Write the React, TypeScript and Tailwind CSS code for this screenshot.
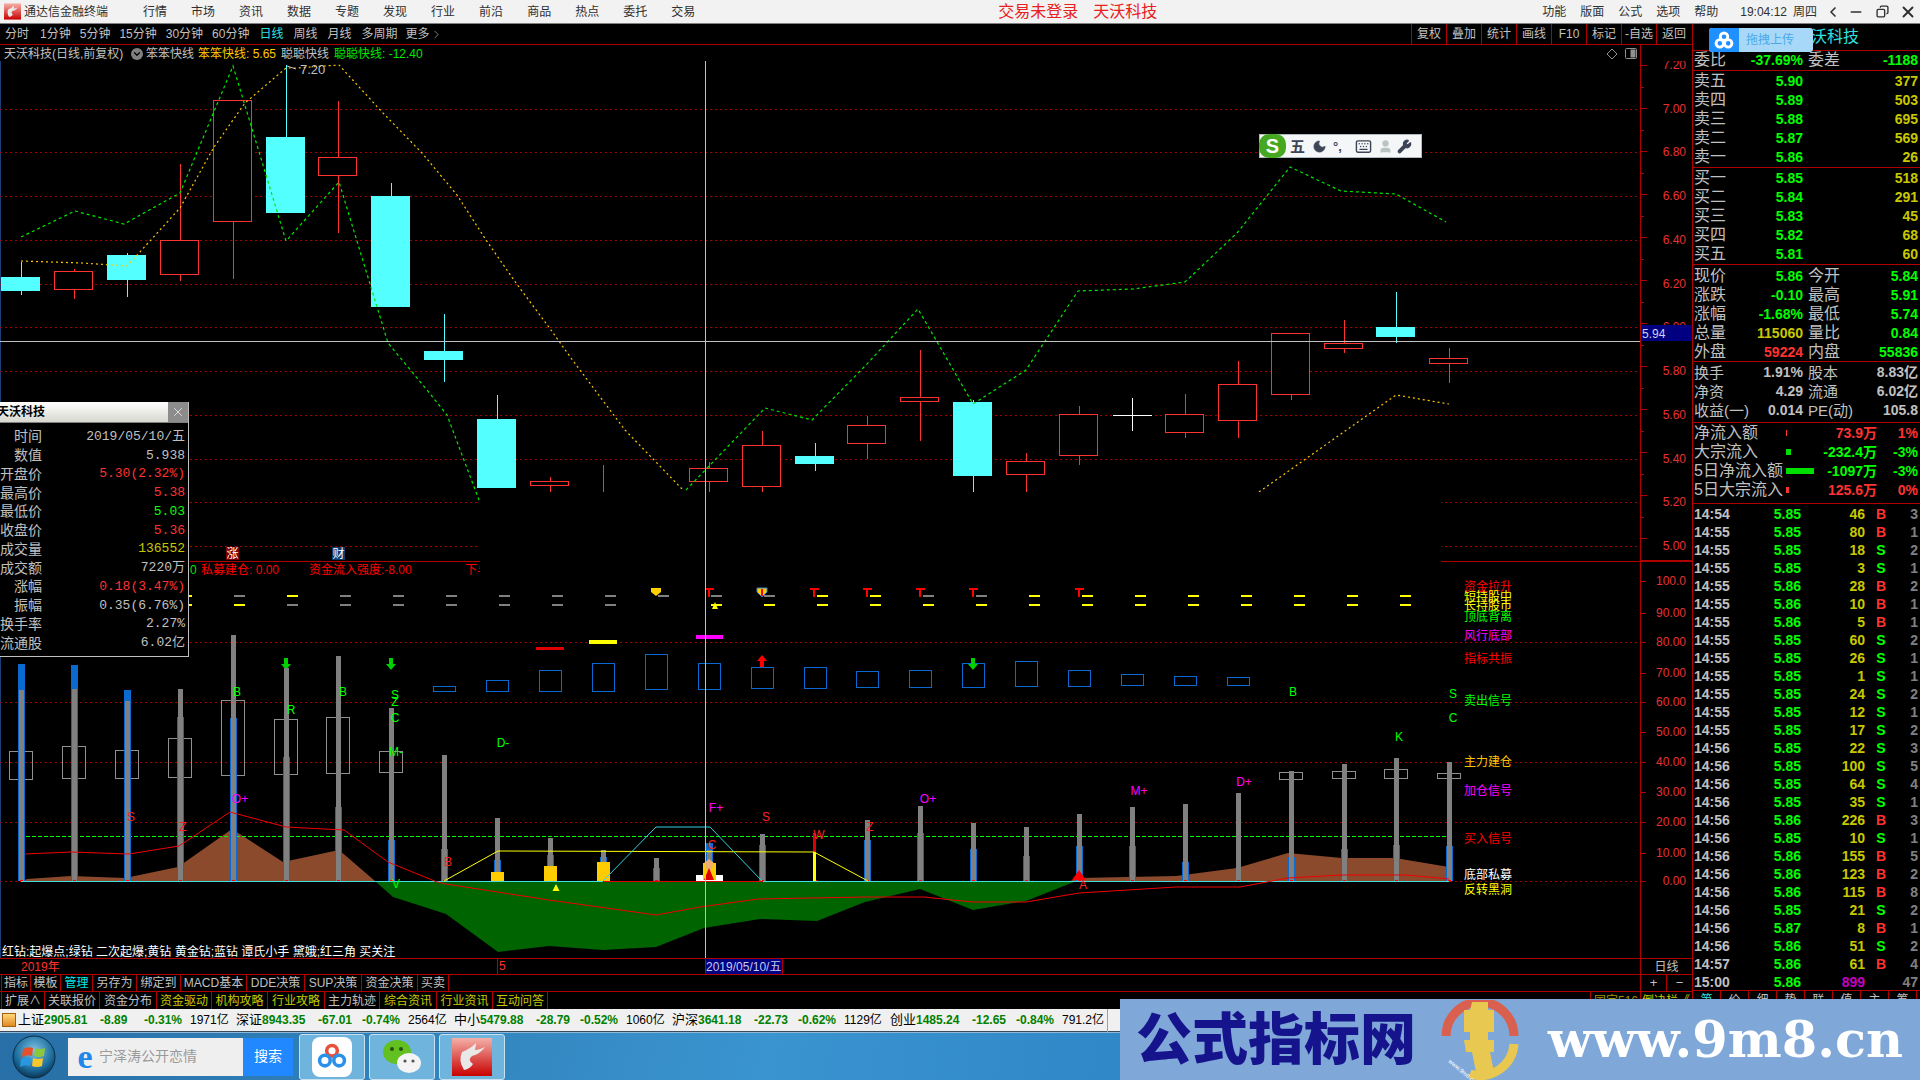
import { Moon, Keyboard, User, Wrench, ChevronLeft, Minus, X, Copy, ChevronDown, ChevronRight } from 'lucide-react';

const X0 = 21;
const STEP = 52.9;
const px = (i: number) => Math.round(X0 + STEP * i);

// candles: index, body top, body bottom, wick top, wick bottom, up (red hollow) or down (cyan filled)
const candles = [
  [0, 277, 290, 262, 295, 0],
  [1, 271, 289, 269, 299, 1],
  [2, 255, 279, 253, 297, 0],
  [3, 240, 274, 164, 281, 1],
  [4, 100, 221, 100, 279, 1],
  [5, 137, 212, 65, 212, 0],
  [6, 157, 175, 101, 233, 1],
  [7, 196, 306, 183, 306, 0],
  [8, 351, 359, 314, 382, 0],
  [9, 419, 487, 395, 487, 0],
  [10, 481, 485, 477, 492, 1],
  [11, 494, 495, 465, 492, 1],
  [13, 468, 481, 462, 492, 1],
  [14, 445, 486, 431, 492, 1],
  [15, 456, 463, 443, 471, 0],
  [16, 425, 443, 416, 459, 1],
  [17, 397, 401, 350, 441, 1],
  [18, 402, 475, 400, 492, 0],
  [19, 461, 474, 453, 492, 1],
  [20, 414, 455, 406, 465, 1],
  [22, 414, 432, 394, 438, 1],
  [23, 384, 420, 361, 438, 1],
  [24, 333, 394, 333, 400, 1],
  [25, 343, 348, 320, 353, 1],
  [26, 327, 336, 292, 343, 0],
  [27, 358, 363, 348, 383, 1],
];

const greenLines = [
  '21,237 75,211 124,224 180,193 233,66 286,241 339,182 388,343 427,390 447,415 479,500',
  '686,490 765,408 812,420 866,365 918,309 973,404 1026,370 1078,291 1133,289 1185,282 1237,233 1290,167 1341,191 1396,194 1446,222',
];
const yellowLines = [
  '21,261 82,263 127,266 139,253 180,208 214,147 245,103 286,68 296,68 339,65 382,112 422,153 457,195 486,240 516,283 551,330 571,358 625,430 683,490',
  '1259,492 1396,395 1449,404',
];

const priceAxis = [
  ['7.20', 65], ['7.00', 109], ['6.80', 152], ['6.60', 196], ['6.40', 240], ['6.20', 284], ['6.00', 327], ['5.80', 371], ['5.60', 415], ['5.40', 459], ['5.20', 502], ['5.00', 546],
] as const;
const priceGrid = [109, 152, 196, 240, 284, 327, 371, 415, 459, 502, 546];
const indexAxis = [
  ['100.0', 581], ['90.00', 613], ['80.00', 642], ['70.00', 673], ['60.00', 702], ['50.00', 732], ['40.00', 762], ['30.00', 792], ['20.00', 822], ['10.00', 853], ['0.00', 881],
] as const;

// volume-like bars: grey top, blue top
const bars = [
  [690, 664], [689, 665], [701, 690], [689, 717], [635, 718], [668, 757], [656, 807], [708, 840], [755, 849], [818, 860], [838, 855], [850, 857], [858, 868],
  [850, 843], [834, 845], [881, 881], [820, 840], [806, 833], [823, 849], [827, 856], [814, 846], [807, 846], [804, 862], [793, 868], [771, 857], [764, 849], [758, 845], [762, 846],
];
const greyBoxes = [
  [0, 751, 779], [1, 746, 778], [2, 750, 778], [3, 738, 777], [4, 700, 775], [5, 719, 774], [6, 717, 773], [7, 751, 772],
  [24, 772, 779], [25, 771, 778], [26, 769, 778], [27, 773, 778],
];
const blueBoxes = [
  [8, 686, 691], [9, 680, 691], [10, 670, 691], [11, 663, 691], [12, 654, 689], [13, 663, 689], [14, 667, 688], [15, 667, 688], [16, 671, 687],
  [17, 670, 687], [18, 663, 687], [19, 661, 686], [20, 670, 686], [21, 674, 685], [22, 676, 685], [23, 677, 685],
];
// colour of the two short marks in every column, g grey, y yellow
const marks = 'yy gy yg gg gg gg gg gg gg gx gy gy yy yy gy gy yy yy yy yy yy yy yy yy'.split(' ');

const chartLetters = [
  ['B', 237, 692, '#00ff00'], ['R', 291, 710, '#00ff00'], ['B', 343, 692, '#00ff00'], ['S', 395, 695, '#00ff00'], ['Z', 395, 702, '#00ff00'], ['C', 395, 718, '#00ff00'],
  ['M-', 396, 752, '#00ff00'], ['D-', 503, 743, '#00ff00'], ['V', 396, 884, '#00ff00'], ['O+', 240, 799, '#ff00ff'], ['S', 131, 817, '#ff2020'], ['Z', 183, 827, '#ff2020'],
  ['B', 448, 862, '#ff2020'], ['F+', 716, 808, '#ff00ff'], ['S', 766, 817, '#ff2020'], ['W', 819, 835, '#ff2020'], ['Z', 870, 827, '#ff2020'], ['O+', 928, 799, '#ff00ff'],
  ['M+', 1139, 791, '#ff00ff'], ['D+', 1244, 782, '#ff00ff'], ['B', 1293, 692, '#00ff00'], ['S', 1453, 694, '#00ff00'], ['C', 1453, 718, '#00ff00'], ['K', 1399, 737, '#00ff00'],
  ['C', 712, 845, '#ff2020'], ['A', 1083, 885, '#ff2020'],
] as const;

const legend = [
  ['资金拉升', 587, '#ff0000'], ['短持股中', 597, '#ffff00'], ['长持股币', 606, '#ffff00'], ['顶底背离', 617, '#00ff00'], ['风行底部', 636, '#ff00ff'], ['指标共振', 659, '#ff0000'],
  ['卖出信号', 701, '#00ff00'], ['主力建仓', 762, '#ffc000'], ['加仓信号', 791, '#ff00ff'], ['买入信号', 839, '#ff0000'], ['底部私募', 875, '#ffffff'], ['反转黑洞', 890, '#ffff00'],
] as const;

const trades = [
  ['14:54', '5.85', '46', 'B', '3'], ['14:55', '5.85', '80', 'B', '1'], ['14:55', '5.85', '18', 'S', '2'], ['14:55', '5.85', '3', 'S', '1'], ['14:55', '5.86', '28', 'B', '2'],
  ['14:55', '5.86', '10', 'B', '1'], ['14:55', '5.86', '5', 'B', '1'], ['14:55', '5.85', '60', 'S', '2'], ['14:55', '5.85', '26', 'S', '1'], ['14:55', '5.85', '1', 'S', '1'],
  ['14:55', '5.85', '24', 'S', '2'], ['14:55', '5.85', '12', 'S', '1'], ['14:55', '5.85', '17', 'S', '2'], ['14:56', '5.85', '22', 'S', '3'], ['14:56', '5.85', '100', 'S', '5'],
  ['14:56', '5.85', '64', 'S', '4'], ['14:56', '5.85', '35', 'S', '1'], ['14:56', '5.86', '226', 'B', '3'], ['14:56', '5.85', '10', 'S', '1'], ['14:56', '5.86', '155', 'B', '5'],
  ['14:56', '5.86', '123', 'B', '2'], ['14:56', '5.86', '115', 'B', '8'], ['14:56', '5.85', '21', 'S', '2'], ['14:56', '5.87', '8', 'B', '1'], ['14:56', '5.86', '51', 'S', '2'],
  ['14:57', '5.86', '61', 'B', '4'], ['15:00', '5.86', '899', '', '47'],
];

const sells = [['卖五', '5.90', '377'], ['卖四', '5.89', '503'], ['卖三', '5.88', '695'], ['卖二', '5.87', '569'], ['卖一', '5.86', '26']];
const buys = [['买一', '5.85', '518'], ['买二', '5.84', '291'], ['买三', '5.83', '45'], ['买四', '5.82', '68'], ['买五', '5.81', '60']];

const quote = [
  ['现价', '5.86', 'text-[#00ff00]', '今开', '5.84', 'text-[#00ff00]'],
  ['涨跌', '-0.10', 'text-[#00ff00]', '最高', '5.91', 'text-[#00ff00]'],
  ['涨幅', '-1.68%', 'text-[#00ff00]', '最低', '5.74', 'text-[#00ff00]'],
  ['总量', '115060', 'text-[#c8c800]', '量比', '0.84', 'text-[#00ff00]'],
  ['外盘', '59224', 'text-[#ff3232]', '内盘', '55836', 'text-[#00ff00]'],
];
const shares = [
  ['换手', '1.91%', '股本', '8.83亿'],
  ['净资', '4.29', '流通', '6.02亿'],
  ['收益(一)', '0.014', 'PE(动)', '105.8'],
];
const flows = [
  ['净流入额', 1, 'bg-[#ff3232]', '73.9万', '1%', 'text-[#ff3232]'],
  ['大宗流入', 5, 'bg-[#00e000]', '-232.4万', '-3%', 'text-[#00ff00]'],
  ['5日净流入额', 28, 'bg-[#00e000]', '-1097万', '-3%', 'text-[#00ff00]'],
  ['5日大宗流入', 3, 'bg-[#ff3232]', '125.6万', '0%', 'text-[#ff3232]'],
] as const;

const dataRows = [
  ['时间', '2019/05/10/五', 'text-[#c0c0c0]'], ['数值', '5.938', 'text-[#c0c0c0]'], ['开盘价', '5.30(2.32%)', 'text-[#ff3232]'], ['最高价', '5.38', 'text-[#ff3232]'],
  ['最低价', '5.03', 'text-[#00ff00]'], ['收盘价', '5.36', 'text-[#ff3232]'], ['成交量', '136552', 'text-[#c8c800]'], ['成交额', '7220万', 'text-[#c0c0c0]'],
  ['涨幅', '0.18(3.47%)', 'text-[#ff3232]'], ['振幅', '0.35(6.76%)', 'text-[#c0c0c0]'], ['换手率', '2.27%', 'text-[#c0c0c0]'], ['流通股', '6.02亿', 'text-[#c0c0c0]'],
];

const menus = ['行情', '市场', '资讯', '数据', '专题', '发现', '行业', '前沿', '商品', '热点', '委托', '交易'];
const periods = ['1分钟', '5分钟', '15分钟', '30分钟', '60分钟'];
const rightTools = ['复权', '叠加', '统计', '画线', 'F10', '标记', '-自选', '返回'];
const tools1 = [['指标', 29], ['模板', 30], ['管理', 32], ['另存为', 44], ['绑定到', 44], ['MACD基本', 66], ['DDE决策', 58], ['SUP决策', 57], ['资金决策', 56], ['买卖', 31]] as const;
const tools2 = [['扩展∧', 43, 0], ['关联报价', 55, 0], ['资金分布', 57, 0], ['资金驱动', 55, 1], ['机构攻略', 56, 1], ['行业攻略', 57, 1], ['主力轨迹', 55, 0], ['综合资讯', 57, 1], ['行业资讯', 56, 1], ['互动问答', 55, 1]] as const;
const indices = [
  ['上证', '2905.81', '-8.89', '-0.31%', '1971亿'],
  ['深证', '8943.35', '-67.01', '-0.74%', '2564亿'],
  ['中小', '5479.88', '-28.79', '-0.52%', '1060亿'],
  ['沪深', '3641.18', '-22.73', '-0.62%', '1129亿'],
  ['创业', '1485.24', '-12.65', '-0.84%', '791.2亿'],
];

const TdxMark = ({ size, id }: { size: string; id: string }) => (
  <svg viewBox="0 0 40 38" className={size}>
    <defs>
      <linearGradient id={id} x1="0" y1="0" x2="0" y2="1">
        <stop offset="0%" stopColor="#f4b0a8" />
        <stop offset="100%" stopColor="#c80000" />
      </linearGradient>
    </defs>
    <rect width="40" height="38" fill={`url(#${id})`} />
    <path d="M24,5 q-6,6 -14,9 q-4,8 2,18 q6,-1 9,-6 q-6,-4 -1,-8 q8,-2 13,-9 q-6,3 -10,3 q1,-4 1,-7 z" fill="#e8e8e8" />
  </svg>
);

const Chart = () => (
  <svg viewBox="0 61 1692 897" className="block w-[1692px] h-[897px]" fontSize="12">
    <line x1="0.5" y1="61" x2="0.5" y2="958" stroke="#1a3f73" />
    {[...priceGrid, 642, 702, 762, 822, 881].map((y) => (
      <line key={y} x1="0" y1={y + 0.5} x2="1640" y2={y + 0.5} stroke="#a80000" strokeDasharray="2 3" />
    ))}

    {candles.map(([i, top, bot, hi, lo, up]) => {
      const x = px(i);
      const c = up ? '#ff3232' : '#54ffff';
      return (
        <g key={i} shapeRendering="crispEdges">
          <line x1={x + 0.5} y1={hi} x2={x + 0.5} y2={lo} stroke={c} />
          <rect x={x - 19.5} y={top + 0.5} width="38" height={bot - top} fill={up ? '#000' : c} stroke={c} />
        </g>
      );
    })}
    {/* the doji */}
    <g stroke="#ffffff" shapeRendering="crispEdges">
      <line x1="1113" y1="415.5" x2="1152" y2="415.5" />
      <line x1="1132.5" y1="398" x2="1132.5" y2="431" />
    </g>
    {greenLines.map((p) => <polyline key={p} points={p} fill="none" stroke="#00e800" strokeWidth="1.2" strokeDasharray="3 3" />)}
    {yellowLines.map((p) => <polyline key={p} points={p} fill="none" stroke="#ffc800" strokeWidth="1.2" strokeDasharray="2 3" />)}
    <text x="300" y="74" fill="#c0c0c0" fontSize="13">7.20</text>
    <polyline points="287,66 296,69" fill="none" stroke="#c0c0c0" />

    {/* blank strip between the panes */}
    <rect x="480" y="492" width="961" height="84" fill="#000" />
    <g shapeRendering="crispEdges">
      <line x1="190" y1="561.5" x2="480" y2="561.5" stroke="#b00000" />
      <line x1="1441" y1="561.5" x2="1640" y2="561.5" stroke="#b00000" />
    </g>
    <rect x="226" y="547" width="13" height="13" fill="#7a0000" />
    <text x="232.5" y="558" textAnchor="middle" fill="#fff" fontSize="12">涨</text>
    <rect x="332" y="547" width="13" height="13" fill="#0a3c6e" />
    <text x="338.5" y="558" textAnchor="middle" fill="#fff" fontSize="12">财</text>
    <text x="190" y="574" fill="#00e000">0</text>
    <text x="201" y="574" fill="#ff0000">私募建仓: 0.00</text>
    <text x="309" y="574" fill="#ff0000">资金流入强度:-8.00</text>
    <text x="465" y="574" fill="#ff0000">下与</text>
    <rect x="480" y="562" width="14" height="14" fill="#000" />

    {/* short marks */}
    <g shapeRendering="crispEdges">
      {marks.map((m, k) => {
        const x = 186 + 53 * k - 5;
        const col = (c: string) => (c === 'y' ? '#ffff00' : '#808080');
        return (
          <g key={k}>
            <rect x={x} y="595" width="11" height="2" fill={col(m[0])} />
            {m[1] !== 'x' && <rect x={x} y="604" width="11" height="2" fill={col(m[1])} />}
          </g>
        );
      })}
    </g>
    {[709, 762, 814, 867, 920, 973, 1079].map((x) => (
      <g key={x} fill="#ff0000" shapeRendering="crispEdges">
        <rect x={x - 4} y="588" width="9" height="2" />
        <rect x={x - 1} y="588" width="2" height="9" />
      </g>
    ))}
    <path d="M651,588 h10 v4 l-5,4 l-5,-4 z" fill="#ffd000" />
    <path d="M757,588 h10 v4 l-5,5 l-5,-5 z" fill="#ffd000" stroke="#3080d0" />
    <rect x="761" y="589" width="2" height="7" fill="#ff0000" />
    <path d="M715,602 l3,7 h-6 z" fill="#ffff00" />
    <rect x="536" y="647" width="28" height="3" fill="#e00000" />
    <rect x="589" y="640" width="28" height="4" fill="#ffff00" />
    <rect x="696" y="635" width="27" height="4" fill="#ff00ff" />

    {blueBoxes.map(([i, t, b]) => (
      <rect key={i} x={px(i) - 10.5} y={t + 0.5} width="22" height={b - t} fill="none" stroke="#0a6ad0" shapeRendering="crispEdges" />
    ))}

    {/* arrows */}
    <path d="M762,655 l5,6 h-3 v6 h-4 v-6 h-3 z" fill="#ff0000" />
    <path d="M973,670 l-5,-6 h3 v-6 h4 v6 h3 z" fill="#00d000" />
    <path d="M286,670 l-5,-6 h3 v-6 h4 v6 h3 z" fill="#00d000" />
    <path d="M391,670 l-5,-6 h3 v-6 h4 v6 h3 z" fill="#00d000" />

    {/* areas */}
    <polygon points="22,881 27,879 71,876 125,878 178,867 232,829 283,862 339,850 375,881" fill="#8b4a2b" />
    <polygon points="1070,881 1079,878 1176,876 1237,868 1288,853 1342,858 1395,858 1449,867 1449,881" fill="#8b4a2b" />
    <polygon points="375,881 393,897 446,914 498,952 549,946 603,950 656,947 704,928 760,919 817,921 865,902 920,889 973,910 1026,901 1074,882 1074,881" fill="#006400" />

    <line x1="26" y1="836.5" x2="1449" y2="836.5" stroke="#00ff00" strokeDasharray="4 2" />

    {greyBoxes.map(([i, t, b]) => (
      <rect key={i} x={px(i) - 11.5} y={t + 0.5} width="23" height={b - t} fill="none" stroke="#909090" shapeRendering="crispEdges" />
    ))}
    <g shapeRendering="crispEdges">
      {bars.map(([grey, blue], i) => {
        const x = px(i);
        return (
          <g key={i}>
            <rect x={x - 3} y={blue} width="7" height={881 - blue} fill="#0a6ad0" />
            <rect x={x - 2} y={grey} width="5" height={881 - grey} fill="#808080" />
            <rect x={x - 1} y="880" width="3" height="2" fill="#ff0000" />
          </g>
        );
      })}
      <rect x="491" y="872" width="13" height="9" fill="#ffcc00" />
      <rect x="544" y="866" width="13" height="15" fill="#ffcc00" />
      <rect x="597" y="862" width="13" height="19" fill="#ffcc00" />
      <rect x="696" y="875" width="27" height="6" fill="#ffffff" />
      <rect x="703" y="863" width="13" height="17" fill="#ffcc00" />
      <rect x="813" y="833" width="3" height="19" fill="#e00000" />
      <rect x="813" y="852" width="3" height="29" fill="#ffff00" />
    </g>
    <path d="M709,859 l5,4 l-3,8 h-4 l-3,-8 z" fill="#f0b070" />
    <path d="M709,868 l5,12 h-10 z" fill="#e00000" />
    <path d="M1079,870 l7,10 h-14 z" fill="#ff0000" />
    <path d="M556,884 l3.5,7 h-7 z" fill="#ffff00" />
    <line x1="21" y1="881.5" x2="603" y2="881.5" stroke="#40e0e0" />
    <line x1="603" y1="881.5" x2="763" y2="881.5" stroke="#e00000" />
    <line x1="763" y1="881.5" x2="1449" y2="881.5" stroke="#40e0e0" />

    <polyline points="444,881 498,851 814,852 868,881" fill="none" stroke="#ffff00" />
    <polyline points="603,881 656,827 710,827 762,881" fill="none" stroke="#30d0e0" />
    <polyline
      points="25,854 71,852 129,854 179,846 230,812 286,827 344,830 388,862 437,882 446,884 549,900 656,915 700,907 758,899 865,897 924,897 972,902 1026,902 1079,893 1176,887 1240,887 1288,878 1342,875 1406,875 1449,879"
      fill="none"
      stroke="#f00000"
    />

    {chartLetters.map(([t, x, y, c], k) => (
      <text key={k} x={x} y={y} fill={c} fontSize="12" textAnchor="middle" dominantBaseline="central">{t}</text>
    ))}
    {legend.map(([t, y, c]) => (
      <text key={t} x="1464" y={y} fill={c} fontSize="12" dominantBaseline="central">{t}</text>
    ))}

    <line x1="0" y1="341.5" x2="1640" y2="341.5" stroke="#c0c0c0" />
    <line x1="705.5" y1="61" x2="705.5" y2="958" stroke="#c0c0c0" />

    {/* axis */}
    <g shapeRendering="crispEdges">
      <line x1="1640.5" y1="61" x2="1640.5" y2="958" stroke="#b00000" />
      <rect x="1640" y="560" width="52" height="2" fill="#b00000" />
      {Array.from({ length: 24 }, (_, k) => 65 + k * 21.5).filter((y) => y < 556).map((y) => (
        <line key={y} x1="1641" y1={Math.round(y) + 0.5} x2={Math.round((y - 65) / 21.5) % 2 ? 1644 : 1647} y2={Math.round(y) + 0.5} stroke="#b00000" />
      ))}
      {indexAxis.map(([, y]) => (
        <line key={y} x1="1641" y1={y + 0.5} x2="1646" y2={y + 0.5} stroke="#b00000" />
      ))}
    </g>
    {priceAxis.map(([t, y]) => (
      <text key={t} x="1686" y={y} textAnchor="end" dominantBaseline="central" fill="#e83030" fontSize="12">{t}</text>
    ))}
    {indexAxis.map(([t, y]) => (
      <text key={t} x="1686" y={y} textAnchor="end" dominantBaseline="central" fill="#e83030" fontSize="12">{t}</text>
    ))}
    <rect x="1641" y="325" width="51" height="16" fill="#000080" />
    <text x="1642" y="334" dominantBaseline="central" fill="#d0d0f0" fontSize="12">5.94</text>
  </svg>
);

const DataWindow = () => (
  <div className="absolute left-0 top-[402px] w-[189px] h-[255px] bg-black border-r border-b border-[#c0c0c0]">
    <div className="flex items-center justify-between h-[21px] bg-gradient-to-b from-[#ffffff] to-[#d8d8d0] border-b border-[#808080]">
      <span className="-ml-[3px] text-[12px] font-bold text-black">天沃科技</span>
      <span className="flex items-center justify-center w-[20px] h-[20px] bg-[#8c8c8c] text-white">
        <X size={14} strokeWidth={1.2} />
      </span>
    </div>
    <div className="pt-[4px]">
      {dataRows.map(([label, val, col]) => (
        <div key={label} className="flex items-center h-[18.75px]">
          <div className="flex justify-end w-[42px] overflow-hidden whitespace-nowrap text-[14px] leading-none text-[#c0c0c0]">{label}</div>
          <div className={`flex-1 pr-[3px] text-right text-[13px] leading-none [font-family:'Liberation_Mono','Noto_Sans_CJK_SC',monospace] ${col}`}>{val}</div>
        </div>
      ))}
    </div>
  </div>
);

const ImeBar = () => (
  <div className="absolute left-[1259px] top-[134px] flex items-center gap-[4px] w-[163px] h-[24px] pr-[3px] bg-[#f4f6f8] border border-[#b0b8c0] text-[#3c4456]">
    <span className="flex items-center justify-center w-[27px] h-[24px] -ml-px rounded-[10px] bg-[#46a820] text-[20px] font-bold leading-none text-white">S</span>
    <span className="text-[15px] font-bold leading-none">五</span>
    <Moon size={15} fill="#3c4456" strokeWidth={1} className="ml-[3px]" />
    <span className="ml-[2px] w-[18px] text-[13px] font-bold leading-none">°,</span>
    <Keyboard size={17} />
    <User size={15} fill="#b8c4c0" stroke="#b8c4c0" className="ml-[2px]" />
    <Wrench size={15} fill="#3c4456" />
  </div>
);

const Watermark = () => (
  <div className="absolute left-[1120px] top-[999px] flex items-center w-[800px] h-[81px] bg-[#7fa8d8]">
    <span className="ml-[16px] w-[290px] whitespace-nowrap text-[56px] font-black leading-none text-[#16148c]">公式指标网</span>
    <svg viewBox="0 0 80 80" className="ml-[14px] shrink-0 w-[80px] h-[80px]">
      <path d="M6,36 A34,34 0 0 1 74,36" fill="none" stroke="#d9604e" strokeWidth="9" />
      <path d="M74,44 A34,34 0 0 1 30,74" fill="none" stroke="#e8c850" strokeWidth="9" />
      <path d="M32,2 h16 v8 h6 v22 h-6 v8 h6 v12 h-4 l4,20 h-18 l-4,-20 h-6 l-2,-12 h6 v-8 h-6 v-22 h6 z" fill="#e8c850" />
      <text x="8" y="62" fill="#fff" fontSize="6" transform="rotate(40 8 62)">www.9m8.cn</text>
    </svg>
    <span className="ml-[28px] whitespace-nowrap text-[51px] font-black leading-none text-white [font-family:'DejaVu_Serif',serif]">www.9m8.cn</span>
  </div>
);

const Taskbar = () => (
  <div className="flex items-center h-[48px] bg-[linear-gradient(100deg,#276fa6,#3a94cf_40%,#2a7fc4_70%,#2e86c8)] border-t border-[#8fb8d8]">
    <svg viewBox="0 0 44 44" className="ml-[12px] w-[44px] h-[44px]">
      <defs>
        <radialGradient id="orb" cx="50%" cy="35%" r="65%">
          <stop offset="0%" stopColor="#7fc4ea" />
          <stop offset="70%" stopColor="#1a6a9a" />
          <stop offset="100%" stopColor="#0c3450" />
        </radialGradient>
      </defs>
      <circle cx="22" cy="22" r="21" fill="url(#orb)" stroke="#0c2c44" />
      <path d="M11,14 q5,-3 10,-1 l-1,8 q-5,-2 -10,1 z" fill="#e8502a" />
      <path d="M23,13 q5,2 10,0 l-1,8 q-5,2 -10,0 z" fill="#8cc83c" />
      <path d="M9,24 q5,-3 10,-1 l-1,8 q-5,-2 -10,1 z" fill="#2a98e0" />
      <path d="M21,23 q5,2 10,0 l-1,8 q-5,2 -10,0 z" fill="#f8c82c" />
    </svg>
    <div className="flex items-center ml-[12px] w-[225px] h-[38px] bg-[#efefef]">
      <span className="ml-[5px] w-[24px] text-center text-[34px] font-bold leading-[30px] text-[#2088e8] [font-family:'Liberation_Serif',serif]">e</span>
      <span className="flex-1 ml-[2px] text-[14px] text-[#9a9a9a]">宁泽涛公开恋情</span>
      <span className="flex items-center justify-center w-[50px] h-[38px] bg-[#2288ff] text-[14px] text-white">搜索</span>
    </div>
    <div className="flex items-center justify-center ml-[6px] w-[66px] h-[46px] rounded-[3px] border border-[#c8e0f0] bg-[#6fb4dc]">
      <span className="flex items-center justify-center w-[40px] h-[40px] rounded-[8px] bg-white">
        <svg viewBox="0 0 36 36" className="w-[32px] h-[32px]" fill="none" strokeWidth="4">
          <circle cx="18" cy="11" r="6" stroke="#e8503a" />
          <circle cx="10" cy="22" r="6" stroke="#2a90e8" />
          <circle cx="26" cy="22" r="6" stroke="#2a90e8" />
        </svg>
      </span>
    </div>
    <div className="flex items-center justify-center ml-[4px] w-[66px] h-[46px] rounded-[3px] border border-[#c8e0f0] bg-[#6fb4dc]">
      <svg viewBox="0 0 44 40" className="w-[44px] h-[40px]">
        <ellipse cx="17" cy="15" rx="14" ry="12" fill="#62c020" />
        <circle cx="12" cy="12" r="2" fill="#2a5010" />
        <circle cx="21" cy="12" r="2" fill="#2a5010" />
        <ellipse cx="29" cy="26" rx="12" ry="10" fill="#f4f4f4" />
        <circle cx="25" cy="24" r="1.6" fill="#555" />
        <circle cx="33" cy="24" r="1.6" fill="#555" />
      </svg>
    </div>
    <div className="flex items-center justify-center ml-[4px] w-[66px] h-[46px] rounded-[3px] border border-[#c8e0f0] bg-[#6fb4dc]">
      <TdxMark size="w-[40px] h-[38px]" id="tdx" />
    </div>
  </div>
);

const StatusBar = () => (
  <div className="flex items-center h-[23px] bg-[#f0f0f0] border-b border-[#3a4a5a] text-[12px] text-black">
    <span className="ml-[2px] mr-[2px] w-[14px] h-[14px] bg-gradient-to-b from-[#ffd878] to-[#e08820] border border-[#a06010]" />
    {indices.map(([name, val, chg, pct, amt]) => (
      <div key={name} className="flex items-center w-[218px] shrink-0">
        <span className="w-[26px] text-[13px]">{name}</span>
        <span className="w-[56px] font-bold text-[#008000]">{val}</span>
        <span className="w-[44px] font-bold text-[#008000]">{chg}</span>
        <span className="w-[46px] font-bold text-[#008000]">{pct}</span>
        <span className="whitespace-nowrap">{amt}</span>
      </div>
    ))}
    <span className="h-[23px] ml-[-1px] border-l border-[#a0a0a0]" />
  </div>
);

const cell = 'flex items-center justify-center h-full border-r border-[#b00000] text-[12px] whitespace-nowrap';
const quoteRow = 'grid grid-cols-[44px_66px_48px_1fr] items-center h-[19px] leading-none';

const App = () => (
  <div className="relative flex flex-col w-[1920px] h-[1080px] overflow-hidden bg-black text-[#c0c0c0] [font-family:'Liberation_Sans','Noto_Sans_CJK_SC',sans-serif]">
    {/* top menu */}
    <div className="flex items-center shrink-0 h-[24px] bg-[#f2f2f2] border-b border-[#808080] text-[12px] text-[#303030]">
      <span className="ml-[4px] w-[17px] h-[17px]">
        <TdxMark size="block w-[17px] h-[17px]" id="tdx-small" />
      </span>
      <span className="ml-[3px] w-[119px]">通达信金融终端</span>
      <div className="flex gap-[24px]">
        {menus.map((m) => <span key={m}>{m}</span>)}
      </div>
      <div className="flex gap-[15px] ml-[303px] text-[16px] text-[#e82020]">
        <span>交易未登录</span>
        <span>天沃科技</span>
      </div>
      <div className="flex items-center gap-[14px] ml-auto">
        {['功能', '版面', '公式', '选项', '帮助'].map((m) => <span key={m}>{m}</span>)}
        <span className="ml-[8px]">19:04:12</span>
      </div>
      <span className="ml-[6px]">周四</span>
      <ChevronLeft size={16} strokeWidth={2.5} className="ml-[8px]" />
      <Minus size={16} strokeWidth={2.5} className="ml-[7px]" />
      <Copy size={13} strokeWidth={2.5} className="ml-[12px] -scale-x-100" />
      <X size={18} strokeWidth={2.5} className="ml-[10px] mr-[3px]" />
    </div>

    <div className="flex shrink-0 h-[985px]">
      {/* chart column */}
      <div className="flex flex-col w-[1692px] shrink-0">
        <div className="flex items-center h-[21px] border-b border-[#b00000] text-[12px]">
          <span className="ml-[5px]">分时</span>
          <div className="flex gap-[9px] ml-[11px]">
            {periods.map((p) => <span key={p}>{p}</span>)}
          </div>
          <span className="ml-[10px] text-[#30e0e0]">日线</span>
          <div className="flex gap-[10px] ml-[10px]">
            <span>周线</span>
            <span>月线</span>
            <span>多周期</span>
          </div>
          <span className="flex items-center ml-[8px]">更多<ChevronRight size={13} strokeWidth={1.2} /></span>
          <div className="flex ml-auto h-full">
            {rightTools.map((t) => (
              <span key={t} className="flex items-center justify-center w-[35px] h-full border-l border-[#b00000]">{t}</span>
            ))}
            <span className="w-px" />
          </div>
        </div>
        <div className="flex items-center h-[16px] pt-[2px] text-[12px] whitespace-nowrap">
          <span className="ml-[4px] w-[127px]">天沃科技(日线,前复权)</span>
          <span className="flex items-center justify-center w-[12px] h-[12px] rounded-full bg-[#808080] text-black">
            <ChevronDown size={10} strokeWidth={3} />
          </span>
          <span className="ml-[3px] w-[52px]">笨笨快线</span>
          <span className="w-[83px] text-[#ffc800]">笨笨快线: 5.65</span>
          <span className="w-[53px]">聪聪快线</span>
          <span className="text-[#00e800]">聪聪快线: -12.40</span>
          <svg viewBox="0 0 30 14" className="ml-auto mr-[55px] w-[30px] h-[14px]" fill="none" stroke="#909090">
            <path d="M5,2 L10,7 L5,12 L0,7 Z" />
            <rect x="18.5" y="1.5" width="11" height="10" rx="1" />
            <rect x="24" y="3" width="4" height="7" fill="#909090" />
          </svg>
          <span className="absolute left-[1640px] top-[45px] h-[16px] border-l border-[#b00000]" />
        </div>
        <Chart />
        <div className="flex items-center h-[16px] border-t border-[#b00000] text-[12px]">
          <span className="ml-[21px] w-[476px] text-[#ff3232]">2019年</span>
          <span className="pl-[1px] w-[208px] h-full border-l border-[#b00000] leading-[15px] text-[#ff3232]">5</span>
          <span className="flex items-center w-[78px] h-full bg-[#000080] border-x border-[#b00000] text-[#c8c8f0]">2019/05/10/五</span>
          <span className="flex items-center justify-center ml-auto w-[52px] h-full border-l border-[#b00000]">日线</span>
        </div>
        <div className="flex h-[17px] border-t border-[#b00000]">
          <div className="w-[2px] border-r border-[#b00000]" />
          {tools1.map(([t, w]) => (
            <span key={t} style={{ width: w }} className={`${cell} ${t === '管理' ? 'text-[#00e8e8]' : ''}`}>{t}</span>
          ))}
          <div className="flex ml-auto w-[52px] h-full border-l border-[#b00000] text-[13px] leading-[15px]">
            <span className="flex-1 text-center border-r border-[#b00000]">+</span>
            <span className="flex-1 text-center">−</span>
          </div>
        </div>
        <div className="flex h-[18px] border-t border-[#b00000]">
          <div className="w-[2px] border-r border-[#b00000]" />
          {tools2.map(([t, w, hot]) => (
            <span key={t} style={{ width: w }} className={`${cell} ${hot ? 'text-[#c8c800]' : ''}`}>{t}</span>
          ))}
          <span className="flex items-start ml-auto w-[50px] h-full border-l border-[#b00000] pl-[3px] text-[12px] whitespace-nowrap text-[#a09000]">固定516</span>
          <span className="flex items-start w-[52px] h-full border-l border-[#b00000] pl-[1px] text-[12px] whitespace-nowrap text-[#c8c800]">倒决栏《</span>
        </div>
      </div>

      {/* quote panel */}
      <div className="flex flex-col w-[228px] shrink-0 border-l border-[#b00000]">
        <div className="flex items-center h-[27px] pl-[102px] border-b border-[#b00000] text-[16px] text-[#30e0e0]">天沃科技</div>
        <div className="grid grid-cols-[44px_66px_48px_1fr] items-center h-[20px] pr-[2px] border-b border-[#b00000] font-bold text-[14px] leading-none text-[#00ff00]">
          <span className="pl-[1px] text-[16px] font-normal text-[#c0c0c0]">委比</span>
          <span className="text-right">-37.69%</span>
          <span className="pl-[5px] text-[16px] font-normal text-[#c0c0c0]">委差</span>
          <span className="text-right">-1188</span>
        </div>
        {[sells, buys].map((rows, k) => (
          <div key={k} className="h-[97px] pt-[1px] pr-[2px] border-b border-[#b00000]">
            {rows.map(([l, p, v]) => (
              <div key={l} className={quoteRow}>
                <span className="pl-[1px] text-[16px]">{l}</span>
                <span className="text-right text-[14px] font-bold text-[#00ff00]">{p}</span>
                <span />
                <span className="text-right text-[14px] font-bold text-[#c8c800]">{v}</span>
              </div>
            ))}
          </div>
        ))}
        <div className="h-[97px] pt-[2px] pr-[2px] border-b border-[#b00000]">
          {quote.map(([a, b, c, d, e, f]) => (
            <div key={a} className={quoteRow}>
              <span className="pl-[1px] text-[16px]">{a}</span>
              <span className={`text-right text-[14px] font-bold ${c}`}>{b}</span>
              <span className="pl-[5px] text-[16px]">{d}</span>
              <span className={`text-right text-[14px] font-bold ${f}`}>{e}</span>
            </div>
          ))}
        </div>
        <div className="h-[61px] pt-[1px] pr-[2px] border-b border-[#b00000]">
          {shares.map(([a, b, c, d]) => (
            <div key={a} className={`${quoteRow} whitespace-nowrap`}>
              <span className="pl-[1px] text-[15px]">{a}</span>
              <span className="text-right text-[14px] font-bold">{b}</span>
              <span className="pl-[5px] text-[15px]">{c}</span>
              <span className="text-right text-[14px] font-bold">{d}</span>
            </div>
          ))}
        </div>
        <div className="h-[81px] pt-[1px] pr-[2px] border-b border-[#b00000]">
          {flows.map(([l, w, bar, v, pct, col]) => (
            <div key={l} className="flex items-center h-[19px] leading-none whitespace-nowrap">
              <span className="pl-[1px] w-[93px] text-[16px]">{l}</span>
              <span className="w-[30px]">
                <span style={{ width: w }} className={`block h-[6px] ${bar}`} />
              </span>
              <span className={`w-[61px] text-right text-[14px] font-bold ${col}`}>{v}</span>
              <span className={`flex-1 text-right text-[14px] font-bold ${col}`}>{pct}</span>
            </div>
          ))}
        </div>
        <div className="h-[488px] border-b border-[#b00000]">
          {trades.map(([t, p, v, side, n], k) => (
            <div key={k} className="grid grid-cols-[50px_58px_64px_32px_21px] items-center h-[18px] text-[14px] font-bold">
              <span className="pl-[1px]">{t}</span>
              <span className="text-right text-[#00ff00]">{p}</span>
              <span className={`text-right ${v === '899' ? 'text-[#c000c0]' : 'text-[#c8c800]'}`}>{v}</span>
              <span className={`text-center ${side === 'B' ? 'text-[#ff3232]' : 'text-[#00ff00]'}`}>{side}</span>
              <span className="text-right text-[#808080]">{n}</span>
            </div>
          ))}
        </div>
        <div className="flex flex-1 text-[12px]">
          {['第', '价', '细', '势', '联', '值', '主', '筹'].map((t, k) => (
            <span key={k} className={`w-[28px] text-center border-r border-[#b00000] ${k === 0 ? 'text-[#30e0e0]' : ''}`}>{t}</span>
          ))}
        </div>
      </div>
    </div>

    <StatusBar />
    <Taskbar />

    {/* overlays */}
    <DataWindow />
    <ImeBar />
    <div className="absolute left-[1709px] top-[28px] flex items-center w-[104px] h-[24px] rounded-[3px] overflow-hidden bg-[#a8d8f8]">
      <span className="flex items-center justify-center w-[30px] h-full bg-[#1e90ff]">
        <svg viewBox="0 0 24 24" className="w-[20px] h-[20px]" fill="none" stroke="#fff" strokeWidth="3.5">
          <circle cx="12" cy="8" r="4.5" />
          <circle cx="7" cy="16" r="4.5" />
          <circle cx="17" cy="16" r="4.5" />
        </svg>
      </span>
      <span className="ml-[7px] text-[12px] text-[#48a8e8]">拖拽上传</span>
    </div>
    <div className="absolute left-[2px] top-[945px] whitespace-nowrap text-[12px] leading-[14px] text-white">红钻:起爆点;绿钻 二次起爆;黄钻 黄金钻;蓝钻 谭氏小手 黛娥;红三角 买关注</div>
    <Watermark />
  </div>
);

export default App;
